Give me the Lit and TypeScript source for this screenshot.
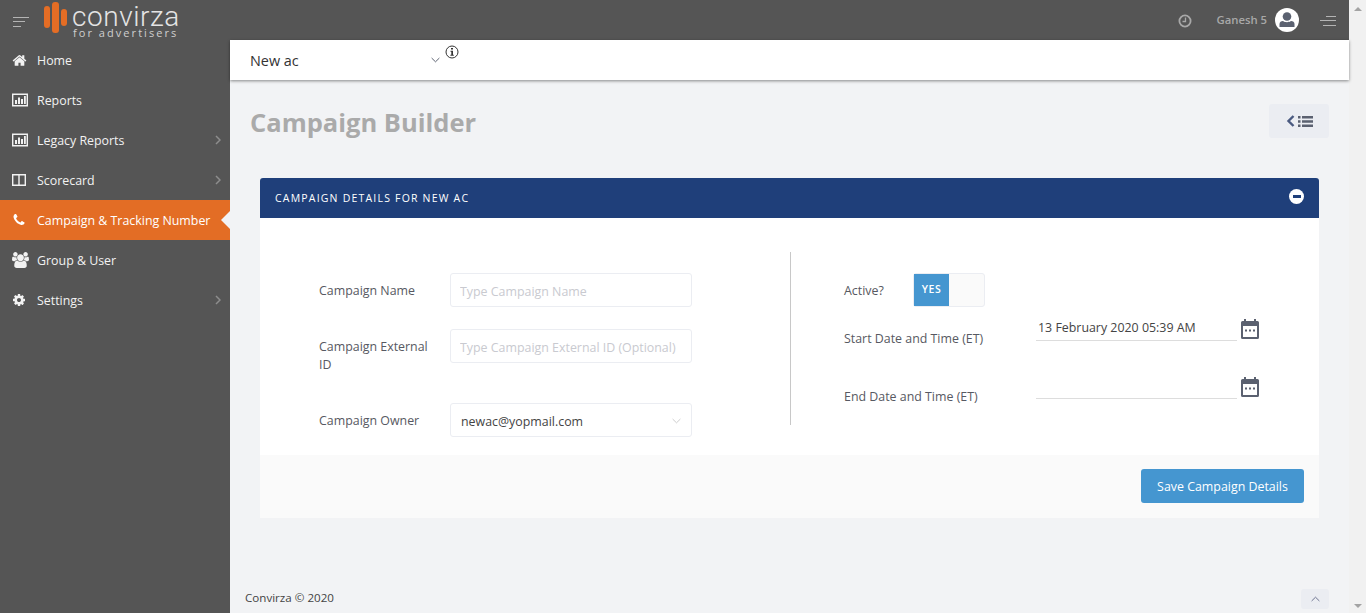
import { LitElement, html, css, svg } from 'lit';
import { customElement } from 'lit/decorators.js';

// font-awesome 4 glyphs, 1792 grid
const ICONS: Record<string, unknown> = {
  home: svg`<svg viewBox="0 0 1792 1792" width="15" height="15"><path fill="currentColor" d="M1472 992v480q0 26-19 45t-45 19h-384v-384h-256v384h-384q-26 0-45-19t-19-45v-480q0-1 .5-3t.5-3l575-474 575 474q1 2 1 6zm223-69l-62 74q-8 9-21 11h-3q-13 0-21-7l-692-577-692 577q-12 8-24 7-13-2-21-11l-62-74q-8-10-7-23.500t11-21.500l719-599q32-26 76-26t76 26l244 204v-195q0-14 9-23t23-9h192q14 0 23 9t9 23v408l219 182q10 8 11 21.500t-7 23.500z"/></svg>`,
  chart: svg`<svg viewBox="0 0 16 14" width="16" height="14"><path fill="none" stroke="currentColor" stroke-width="1.4" d="M.7 1.2h14.600v11.600H.7z"/><path fill="currentColor" d="M3 7h2v4H3zM6 4.500h2V11H6zM9 6h2v5H9zM12 3h1.800v8H12z"/></svg>`,
  columns: svg`<svg viewBox="0 0 14 12" width="14" height="12"><path fill="none" stroke="currentColor" stroke-width="1.400" d="M.7.7h12.600v10.600H.7zM7 .7v10.600"/></svg>`,
  phone: svg`<svg viewBox="0 0 1792 1792" width="14" height="14"><path fill="currentColor" d="M1600 1240q0 27-10 70.500t-21 68.500q-21 50-122 106-94 51-186 51-27 0-53-3.500t-57.500-12.500-47-14.500-55.500-20.500-49-18q-98-35-175-83-127-79-264-216t-216-264q-48-77-83-175-3-9-18-49t-20.500-55.500-14.500-47-12.500-57.500-3.500-53q0-92 51-186 56-101 106-122 25-11 68.500-21t70.500-10q14 0 21 3 18 6 53 76 11 19 30 54t35 63.500 31 53.500q3 4 17.500 25t21.500 35.500 7 28.500q0 20-28.500 50t-62 55-62 53-28.500 46q0 9 5 22.500t8.500 20.500 14 24 11.500 19q76 137 174 235t235 174q2 1 19 11.500t24 14 20.500 8.500 22.500 5q18 0 46-28.500t53-62 55-62 50-28.500q14 0 28.500 7t35.500 21.500 25 17.500q25 15 53.500 31t63.500 35 54 30q70 35 76 53 3 7 3 21z"/></svg>`,
  users: svg`<svg viewBox="0 0 1920 1792" width="17" height="16"><path fill="currentColor" d="M593 896q-162 5-265 128h-134q-82 0-138-40.500t-56-118.500q0-353 124-353 6 0 43.500 21t97.500 42.500 119 21.500q67 0 133-23-5 37-5 66 0 139 81 256zm1071 637q0 120-73 189.500t-194 69.500h-874q-121 0-194-69.500t-73-189.500q0-53 3.500-103.500t14-109 26.500-108.500 43-97.500 62-81 85.500-53.500 111.500-20q10 0 43 21.500t73 48 107 48 135 21.500 135-21.500 107-48 73-48 43-21.500q61 0 111.500 20t85.500 53.500 62 81 43 97.500 26.500 108.500 14 109 3.500 103.500zm-1024-1277q0 106-75 181t-181 75-181-75-75-181 75-181 181-75 181 75 75 181zm704 384q0 159-112.500 271.500t-271.500 112.500-271.500-112.500-112.500-271.500 112.500-271.500 271.500-112.500 271.500 112.500 112.500 271.500zm576 225q0 78-56 118.500t-138 40.500h-134q-103-123-265-128 81-117 81-256 0-29-5-66 66 23 133 23 59 0 119-21.500t97.500-42.500 43.500-21q124 0 124 353zm-128-609q0 106-75 181t-181 75-181-75-75-181 75-181 181-75 181 75 75 181z"/></svg>`,
  cog: svg`<svg viewBox="0 0 1792 1792" width="14" height="14"><path fill="currentColor" d="M1152 896q0-106-75-181t-181-75-181 75-75 181 75 181 181 75 181-75 75-181zm512-109v222q0 12-8 23t-20 13l-185 28q-19 54-39 91 35 50 107 138 10 12 10 25t-9 23q-27 37-99 108t-94 71q-12 0-26-9l-138-108q-44 23-91 38-16 136-29 186-7 28-36 28h-222q-14 0-24.500-8.500t-11.500-21.500l-28-184q-49-16-90-37l-141 107q-10 9-25 9-14 0-25-11-126-114-165-168-7-10-7-23 0-12 8-23 15-21 51-66.500t54-70.500q-27-50-41-99l-183-27q-13-2-21-12.500t-8-23.500v-222q0-12 8-23t19-13l186-28q14-46 39-92-40-57-107-138-10-12-10-24 0-10 9-23 26-36 98.500-107.500t94.500-71.500q13 0 26 10l138 107q44-23 91-38 16-136 29-186 7-28 36-28h222q14 0 24.500 8.500t11.500 21.500l28 184q49 16 90 37l142-107q9-9 24-9 13 0 25 10 129 119 165 170 7 8 7 22 0 12-8 23-15 21-51 66.500t-54 70.500q26 50 41 98l183 28q13 2 21 12.500t8 23.500z"/></svg>`,
};

const calendar = svg`<svg viewBox="0 0 18 20" width="18" height="20"><path fill="#5b6170" d="M3 0h2v2h8V0h2v2h1.500A1.500 1.500 0 0 1 18 3.500v15a1.500 1.500 0 0 1-1.500 1.500h-15A1.500 1.500 0 0 1 0 18.500v-15A1.500 1.500 0 0 1 1.500 2H3zM2 7v11h14V7z"/><path fill="#5b6170" d="M4 10.500h2v2H4zM8 10.500h2v2H8zM12 10.500h2v2h-2z"/></svg>`;

const chevron = (color: string) => svg`<svg viewBox="0 0 10 6" width="9" height="6"><path fill="none" stroke=${color} stroke-width="1.100" d="M.7.8 5 5l4.300-4.200"/></svg>`;

const NAV = [
  { icon: 'home', label: 'Home' },
  { icon: 'chart', label: 'Reports' },
  { icon: 'chart', label: 'Legacy Reports', arrow: true },
  { icon: 'columns', label: 'Scorecard', arrow: true },
  { icon: 'phone', label: 'Campaign & Tracking Number', active: true },
  { icon: 'users', label: 'Group & User' },
  { icon: 'cog', label: 'Settings', arrow: true },
];

@customElement('app-root')
export class AppRoot extends LitElement {
  static styles = css`
    :host {
      display: flex;
      height: 613px;
      overflow: hidden;
      background: #f2f3f5;
      font-family: "Open Sans", sans-serif;
      font-size: 12.4px;
      color: #575962;
    }

    .page {
      width: 1349px;
      display: flex;
      flex-direction: column;
    }

    .scrollbar {
      width: 17px;
      background: #f1f1f1;
      display: flex;
      flex-direction: column;
      justify-content: space-between;
      align-items: center;
      padding: 7px 0 5px;
      box-sizing: border-box;
    }

    .tri-up, .tri-down {
      width: 0;
      height: 0;
      border-left: 4px solid transparent;
      border-right: 4px solid transparent;
    }

    .tri-up { border-bottom: 4px solid #a3a3a3; }
    .tri-down { border-top: 4px solid #a3a3a3; }

    .topbar {
      height: 40px;
      flex: none;
      background: #555;
      display: flex;
      align-items: center;
      padding: 0 13px;
    }

    .burger {
      width: 16px;
      display: flex;
      flex-direction: column;
      gap: 3.500px;
    }

    .burger i {
      display: block;
      height: 1px;
      background: #b4b4b4;
    }

    .burger.left { margin-top: 3px; }
    .burger.left i:nth-child(2) { width: 12px; }
    .burger.left i:nth-child(3) { width: 8px; }
    .burger.right { margin-top: 1px; }
    .burger.right i:nth-child(1) { width: 10px; margin-left: 6px; }
    .burger.right i:nth-child(3) { width: 13px; margin-left: 3px; }

    .logo {
      display: flex;
      margin-left: 15px;
      align-items: flex-start;
      height: 40px;
    }

    .marks {
      display: flex;
      gap: 2px;
      align-items: center;
      height: 34px;
    }

    .marks i {
      display: block;
      width: 6px;
      border-radius: 3px;
      background: #e46d25;
    }

    .marks i:nth-child(1) { height: 22px; }
    .marks i:nth-child(2) { height: 31px; width: 7px; }
    .marks i:nth-child(3) { height: 17px; }

    .wordmark {
      margin-left: 5px;
      color: #e4e4e4;
      display: flex;
      flex-direction: column;
    }

    .wordmark b {
      font-family: Roboto, sans-serif;
      font-weight: 300;
      font-size: 28px;
      line-height: 22px;
      margin-top: 6px;
      letter-spacing: .55px;
    }

    .wordmark span {
      font-size: 11px;
      line-height: 10px;
      letter-spacing: 2.050px;
      padding-left: 1px;
      color: #cfcfcf;
    }

    .top-right {
      margin-left: auto;
      display: flex;
      align-items: center;
      color: #a8a8a8;
    }

    .clock {
      display: flex;
      margin-top: 2px;
    }

    .user-name {
      margin-left: 24px;
      font-size: 11.300px;
      font-weight: 600;
      margin-top: -1px;
    }

    .avatar {
      margin: 0 21px 0 8px;
      display: flex;
    }

    .body {
      flex: 1;
      display: flex;
      min-height: 0;
    }

    .sidebar {
      width: 230px;
      flex: none;
      background: #555;
    }

    .nav-item {
      height: 40px;
      display: flex;
      align-items: center;
      position: relative;
      color: #f2f2f2;
    }

    .nav-item.active {
      background: #e36d25;
      color: #fff;
    }

    .nav-item.active::after {
      content: "";
      position: absolute;
      right: 0;
      top: 11px;
      border-top: 9px solid transparent;
      border-bottom: 9px solid transparent;
      border-right: 9px solid #f2f3f5;
    }

    .nav-icon {
      width: 37px;
      padding-left: 12px;
      box-sizing: border-box;
      display: flex;
      flex: none;
    }

    .nav-arrow {
      position: absolute;
      right: 9px;
      top: 15px;
      color: #8d8d8d;
      display: flex;
    }

    .main {
      flex: 1;
      min-width: 0;
      display: flex;
      flex-direction: column;
    }

    .account-bar {
      height: 40px;
      flex: none;
      background: #fff;
      box-shadow: 0 1px 3px rgba(0, 0, 0, .45);
      display: flex;
      position: relative;
      padding-left: 20px;
      font-size: 14.400px;
      color: #333;
    }

    .account-name {
      width: 181px;
      line-height: 41px;
    }

    .account-chevron {
      margin-top: 17px;
      display: flex;
      height: 6px;
    }

    .info {
      margin: 5px 0 0 5px;
      display: flex;
      height: 14px;
    }

    .content {
      flex: 1;
      padding: 24px 20px 0;
      display: flex;
      flex-direction: column;
    }

    .heading {
      display: flex;
      justify-content: space-between;
      align-items: center;
      height: 34px;
    }

    h1 {
      margin: 1px 0 0;
      font-size: 25.500px;
      font-weight: 700;
      color: #aaa;
    }

    .list-btn {
      width: 60px;
      height: 34px;
      background: #ebedf2;
      border-radius: 3px;
      display: flex;
      align-items: center;
      justify-content: center;
      gap: 3px;
    }

    .portlet {
      margin: 40px 10px 0;
    }

    .portlet-head {
      height: 40px;
      background: #1f3f7a;
      border-radius: 3px 3px 0 0;
      display: flex;
      align-items: center;
      justify-content: space-between;
      padding: 0 15px;
      color: #fff;
      font-size: 10.500px;
      font-weight: 400;
      letter-spacing: 1.200px;
      text-transform: uppercase;
    }

    .collapse {
      width: 15px;
      height: 15px;
      border-radius: 50%;
      background: #fff;
      display: flex;
      align-items: center;
      justify-content: center;
      margin: -4px 0 0;
    }

    .collapse i {
      display: block;
      width: 8px;
      height: 3px;
      background: #1f3f7a;
    }

    .portlet-body {
      background: #fff;
      display: flex;
      align-items: flex-start;
      padding-top: 34px;
      height: 237px;
      box-sizing: border-box;
    }

    .col-left {
      width: 530px;
      flex: none;
      box-sizing: border-box;
      padding: 21px 0 0 59px;
      display: grid;
      grid-template-columns: 131px 242px;
      row-gap: 22px;
      align-items: start;
    }

    .col-left label {
      padding: 9px 15px 0 0;
      line-height: 18px;
    }

    .col-left .tall { padding-bottom: 7px; }

    input, .select {
      box-sizing: border-box;
      width: 242px;
      height: 34px;
      border: 1px solid #ebedf2;
      border-radius: 3px;
      padding: 2px 10px 0;
      font: inherit;
      color: #444;
      background: #fff;
      outline: none;
    }

    input { padding-left: 9px; }
    input::placeholder { color: #c9cad0; }

    .select {
      display: flex;
      align-items: center;
      justify-content: space-between;
    }

    .col-right {
      flex: 1;
      height: 173px;
      border-left: 1px solid #c8c8c8;
      box-sizing: border-box;
      padding: 21px 0 0 53px;
    }

    .active-row {
      display: flex;
      align-items: center;
      height: 34px;
      margin-bottom: 8px;
    }

    .active-row label { width: 69px; }

    .toggle {
      width: 72px;
      height: 34px;
      box-sizing: border-box;
      border: 1px solid #ebedf2;
      border-radius: 3px;
      background: #fafafa;
      display: flex;
    }

    .toggle span {
      width: 35px;
      background: #4596d0;
      color: #fff;
      font-size: 10.500px;
      font-weight: 600;
      letter-spacing: .6px;
      display: flex;
      align-items: center;
      justify-content: center;
      padding-bottom: 2px;
      box-sizing: border-box;
    }

    .date-row {
      display: flex;
      align-items: flex-start;
      height: 26px;
      margin-bottom: 32px;
    }

    .date-row label {
      width: 192px;
      padding-top: 15px;
      line-height: 18px;
      flex: none;
    }

    .date-value {
      width: 201px;
      height: 26px;
      box-sizing: border-box;
      border-bottom: 1px solid #ddd;
      padding-left: 2px;
      line-height: 26px;
      color: #444;
    }

    .date-icon {
      margin: 4px 0 0 4px;
      display: flex;
    }

    .portlet-foot {
      height: 63px;
      background: #fafafa;
      display: flex;
      align-items: center;
      justify-content: flex-end;
      padding: 0 15px 1px;
      box-sizing: border-box;
    }

    .save {
      height: 34px;
      width: 163px;
      border: 0;
      border-radius: 3px;
      background: #4596d0;
      color: #fff;
      font: inherit;
    }

    .footer {
      margin-top: auto;
      height: 32px;
      display: flex;
      align-items: center;
      justify-content: space-between;
      margin-left: -5px;
      font-size: 11.600px;
      color: #444;
    }

    .to-top {
      width: 28px;
      height: 20px;
      background: #ebedf2;
      border-radius: 3px;
      display: flex;
      align-items: center;
      justify-content: center;
      margin-top: 4px;
    }

    .to-top svg { transform: scaleY(-1); }
  `;

  render() {
    return html`
      <div class="page">
        <header class="topbar">
          <div class="burger left"><i></i><i></i><i></i></div>
          <div class="logo">
            <div class="marks"><i></i><i></i><i></i></div>
            <div class="wordmark"><b>convirza</b><span>for advertisers</span></div>
          </div>
          <div class="top-right">
            <span class="clock">
              <svg viewBox="0 0 14 14" width="14" height="14">
                <circle cx="7" cy="7" r="5.600" fill="none" stroke="currentColor" stroke-width="1.800"></circle>
                <path fill="none" stroke="currentColor" stroke-width="1.300" d="M7.500 3.500v4H4.500"></path>
              </svg>
            </span>
            <span class="user-name">Ganesh 5</span>
            <span class="avatar">
              <svg viewBox="0 0 24 24" width="24" height="24">
                <circle cx="12" cy="12" r="12" fill="#fff"></circle>
                <circle cx="12" cy="8.500" r="4.300" fill="#5b6170"></circle>
                <path fill="#5b6170" d="M4.500 19v-3c0-2 1.500-3 3.500-3 1 .8 2.500 1.200 4 1.200s3-.4 4-1.200c2 0 3.500 1 3.500 3v3z"></path>
              </svg>
            </span>
            <div class="burger right"><i></i><i></i><i></i></div>
          </div>
        </header>
        <div class="body">
          <nav class="sidebar">
            ${NAV.map(n => html`
              <div class="nav-item ${n.active ? 'active' : ''}">
                <span class="nav-icon">${ICONS[n.icon]}</span>
                <span>${n.label}</span>
                ${n.arrow ? html`<span class="nav-arrow">
                  <svg viewBox="0 0 6 10" width="6" height="10"><path fill="none" stroke="currentColor" stroke-width="1.500" d="M1 1l4 4-4 4"></path></svg>
                </span>` : ''}
              </div>
            `)}
          </nav>
          <main class="main">
            <div class="account-bar">
              <span class="account-name">New ac</span>
              <span class="account-chevron">${chevron('#5b6170')}</span>
              <span class="info">
                <svg viewBox="0 0 14 14" width="14" height="14">
                  <circle cx="7" cy="7" r="6" fill="none" stroke="#333" stroke-width="1"></circle>
                  <path fill="#333" d="M6 3h2v1.600H6zM5.500 5.800H8v3.900h.8v1H5.400v-1h.9V6.800h-.8z"></path>
                </svg>
              </span>
            </div>
            <div class="content">
              <div class="heading">
                <h1>Campaign Builder</h1>
                <div class="list-btn">
                  <svg viewBox="0 0 9 14" width="9" height="14"><path fill="none" stroke="#4a5a80" stroke-width="2.400" d="M7.500 2 2.500 7l5 5"></path></svg>
                  <svg viewBox="0 0 15 11" width="15" height="11"><path fill="#5b6170" d="M0 0h2.500v2.400H0zM4 0h11v2.400H4zM0 4.300h2.500v2.400H0zM4 4.300h11v2.400H4zM0 8.600h2.500V11H0zM4 8.600h11V11H4z"></path></svg>
                </div>
              </div>
              <section class="portlet">
                <div class="portlet-head">
                  <span>Campaign Details for New ac</span>
                  <span class="collapse"><i></i></span>
                </div>
                <div class="portlet-body">
                  <div class="col-left">
                    <label>Campaign Name</label>
                    <input placeholder="Type Campaign Name" />
                    <label class="tall">Campaign External ID</label>
                    <input placeholder="Type Campaign External ID (Optional)" />
                    <label>Campaign Owner</label>
                    <div class="select"><span>newac@yopmail.com</span>${chevron('#ccc')}</div>
                  </div>
                  <div class="col-right">
                    <div class="active-row">
                      <label>Active?</label>
                      <div class="toggle"><span>YES</span></div>
                    </div>
                    <div class="date-row">
                      <label>Start Date and Time (ET)</label>
                      <div class="date-value">13 February 2020 05:39 AM</div>
                      <span class="date-icon">${calendar}</span>
                    </div>
                    <div class="date-row">
                      <label>End Date and Time (ET)</label>
                      <div class="date-value"></div>
                      <span class="date-icon">${calendar}</span>
                    </div>
                  </div>
                </div>
                <div class="portlet-foot">
                  <button class="save">Save Campaign Details</button>
                </div>
              </section>
              <footer class="footer">
                <span>Convirza © 2020</span>
                <span class="to-top">${chevron('#6d7390')}</span>
              </footer>
            </div>
          </main>
        </div>
      </div>
      <div class="scrollbar"><i class="tri-up"></i><i class="tri-down"></i></div>
    `;
  }
}
